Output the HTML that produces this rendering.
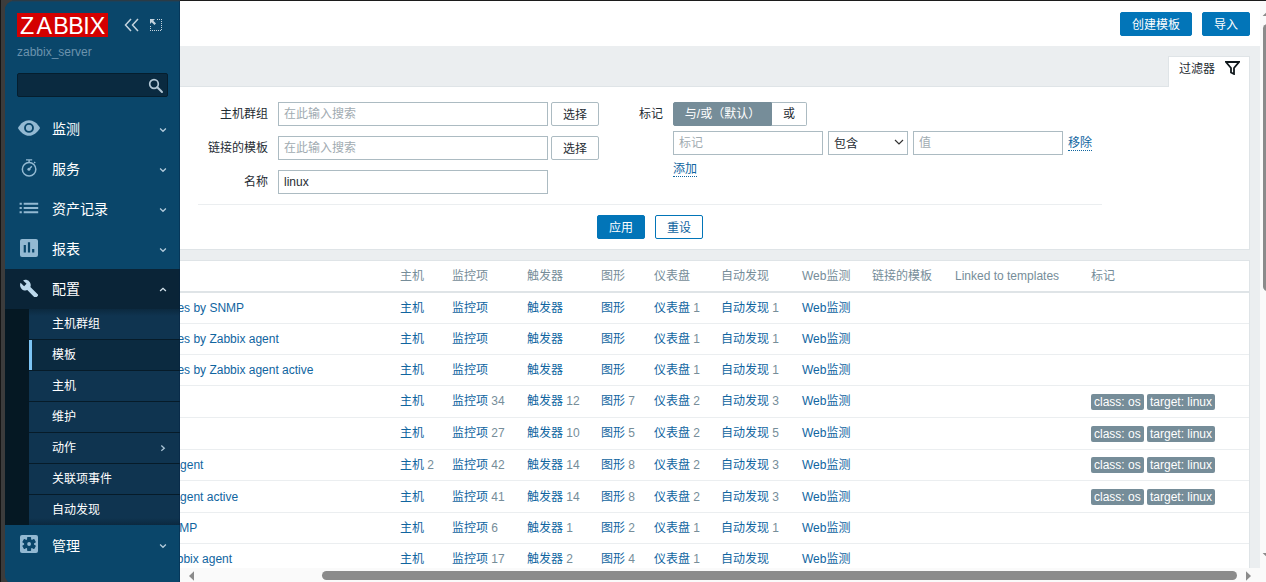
<!DOCTYPE html>
<html lang="zh-CN">
<head>
<meta charset="utf-8">
<title>模板的配置</title>
<style>
*{box-sizing:border-box;margin:0;padding:0}
html,body{width:1266px;height:582px;overflow:hidden}
body{background:#3c3c3c;font-family:"Liberation Sans","Noto Sans CJK SC",sans-serif;font-size:12px;color:#1f2c33;position:relative}
.abs{position:absolute}
.t{position:absolute;white-space:nowrap;line-height:18px;height:18px}
a{color:#10659f;text-decoration:none}
#edgeL{left:0;top:0;width:1px;height:582px;background:#151515}
#edgeT{left:180px;top:0;width:1086px;height:1px;background:#1c1c1c}
/* main */
#main{left:180px;top:1px;width:1080px;height:581px;background:#ebeef0;overflow:hidden}
#hdr{left:0;top:0;width:1080px;height:45px;background:#fff}
.btn{position:absolute;height:24px;line-height:24px;border:1px solid #0275b8;background:#0275b8;color:#fff;border-radius:2px;text-align:center;font-size:12px;white-space:nowrap}
.btn.alt{background:#fff;color:#10659f}
.btn.gr{background:#fff;color:#1f2c33;border-color:#acbbc2}
.inp{position:absolute;height:24px;border:1px solid #acbbc2;background:#fff;line-height:22px;padding-left:5px;color:#1f2c33;white-space:nowrap}
.ph{color:#a1abb1}
.lbl{position:absolute;white-space:nowrap;line-height:18px;text-align:right}
.dot{border-bottom:1px dotted #10659f}
/* table */
#tbl{left:-1px;top:259px;width:1071px;height:330px;background:#fff;border:1px solid #dfe4e7}
.hl{position:absolute;left:0;width:1069px;height:1px;background:#ebeef0}
.th{color:#768d99}
.g{color:#768d99}
.tag{position:absolute;height:16px;line-height:16px;background:#768d99;color:#fff;border-radius:2px;padding:0 3px;white-space:nowrap}
/* sidebar */
#side{left:5px;top:1px;width:175px;height:583px;background:#0a466a;border-radius:9px 0 0 9px;overflow:hidden}
.mi{position:absolute;left:47px;color:#fff;font-size:14px;line-height:20px;white-space:nowrap}
.si{position:absolute;left:24px;width:151px;height:30px;background:#0f3450;color:#fff;font-size:12px;line-height:30px;padding-left:23px;white-space:nowrap}
</style>
</head>
<body>
<div class="abs" id="edgeL"></div>

<div class="abs" id="main">
  <div class="abs" id="hdr"></div>
  <div class="btn" style="left:940px;top:11px;width:72px">创建模板</div>
  <div class="btn" style="left:1022px;top:11px;width:48px">导入</div>

  <!-- filter tab -->
  <div class="abs" style="left:988px;top:55px;width:82px;height:32px;background:#fff;border:1px solid #dfe4e7;border-bottom:none"></div>
  <div class="abs" style="left:-1px;top:85px;width:1071px;height:164px;background:#fff;border:1px solid #dfe4e7"></div>
  <div class="abs" style="left:989px;top:85px;width:80px;height:2px;background:#fff"></div>
  <div class="t" style="left:999px;top:59px;color:#1f2c33">过滤器</div>
  <svg class="abs" style="left:1045px;top:60px" width="15" height="14" viewBox="0 0 15 14"><path d="M1 1h13l-5 6v6l-3-1.500v-4.500z" fill="none" stroke="#10181c" stroke-width="1.800" stroke-linejoin="miter"/></svg>

  <!-- filter left -->
  <div class="lbl" style="left:0;width:88px;top:104px">主机群组</div>
  <div class="inp ph" style="left:98px;top:101px;width:270px">在此输入搜索</div>
  <div class="btn gr" style="left:371px;top:101px;width:48px">选择</div>
  <div class="lbl" style="left:0;width:88px;top:138px">链接的模板</div>
  <div class="inp ph" style="left:98px;top:135px;width:270px">在此输入搜索</div>
  <div class="btn gr" style="left:371px;top:135px;width:48px">选择</div>
  <div class="lbl" style="left:0;width:88px;top:172px">名称</div>
  <div class="inp" style="left:98px;top:169px;width:270px">linux</div>

  <!-- filter right -->
  <div class="lbl" style="left:440px;width:43px;top:104px">标记</div>
  <div class="abs" style="left:493px;top:101px;width:99px;height:24px;background:#768d99;color:#fff;border:1px solid #768d99;border-radius:2px 0 0 2px;line-height:22px;text-align:center;white-space:nowrap">与/或（默认）</div>
  <div class="abs" style="left:592px;top:101px;width:35px;height:24px;background:#fff;border:1px solid #acbbc2;border-left:none;border-radius:0 2px 2px 0;line-height:22px;text-align:center">或</div>
  <div class="inp ph" style="left:493px;top:130px;width:150px">标记</div>
  <div class="inp" style="left:648px;top:130px;width:80px;line-height:25px">包含</div>
  <svg class="abs" style="left:714px;top:138px" width="10" height="7" viewBox="0 0 10 7"><path d="M1 1l4 4 4-4" fill="none" stroke="#333" stroke-width="1.200"/></svg>
  <div class="inp ph" style="left:733px;top:130px;width:150px">值</div>
  <div class="t" style="left:888px;top:133px"><a class="dot">移除</a></div>
  <div class="t" style="left:493px;top:159px"><a class="dot">添加</a></div>

  <div class="abs" style="left:18px;top:203px;width:904px;height:1px;background:#ebeef0"></div>
  <div class="btn" style="left:417px;top:214px;width:48px">应用</div>
  <div class="btn alt" style="left:475px;top:214px;width:48px">重设</div>

  <!-- table -->
  <div class="abs" id="tbl">
    <div class="abs" style="left:0;top:30px;width:1069px;height:2px;background:#dfe4e7"></div>
    <div class="hl" style="top:62px"></div>
    <div class="hl" style="top:93px"></div>
    <div class="hl" style="top:124px"></div>
    <div class="hl" style="top:156px"></div>
    <div class="hl" style="top:188px"></div>
    <div class="hl" style="top:219px"></div>
    <div class="hl" style="top:251px"></div>
    <div class="hl" style="top:282px"></div>
  </div>
  <!-- table header -->
  <div class="t th" style="left:220px;top:266px">主机</div>
  <div class="t th" style="left:272px;top:266px">监控项</div>
  <div class="t th" style="left:347px;top:266px">触发器</div>
  <div class="t th" style="left:421px;top:266px">图形</div>
  <div class="t th" style="left:474px;top:266px">仪表盘</div>
  <div class="t th" style="left:541px;top:266px">自动发现</div>
  <div class="t th" style="left:622px;top:266px">Web监测</div>
  <div class="t th" style="left:692px;top:266px">链接的模板</div>
  <div class="t th" style="left:775px;top:266px">Linked to templates</div>
  <div class="t th" style="left:911px;top:266px">标记</div>
  <!-- row: Linux block devices by SNMP -->
  <div class="t" style="left:-94px;top:298px"><a>Linux block devices by SNMP</a></div>
  <div class="t" style="left:220px;top:298px"><a>主机</a></div>
  <div class="t" style="left:272px;top:298px"><a>监控项</a></div>
  <div class="t" style="left:347px;top:298px"><a>触发器</a></div>
  <div class="t" style="left:421px;top:298px"><a>图形</a></div>
  <div class="t" style="left:474px;top:298px"><a>仪表盘</a> <span class="g">1</span></div>
  <div class="t" style="left:541px;top:298px"><a>自动发现</a> <span class="g">1</span></div>
  <div class="t" style="left:622px;top:298px"><a>Web监测</a></div>
  <!-- row: Linux block devices by Zabbix agent -->
  <div class="t" style="left:-94px;top:329px"><a>Linux block devices by Zabbix agent</a></div>
  <div class="t" style="left:220px;top:329px"><a>主机</a></div>
  <div class="t" style="left:272px;top:329px"><a>监控项</a></div>
  <div class="t" style="left:347px;top:329px"><a>触发器</a></div>
  <div class="t" style="left:421px;top:329px"><a>图形</a></div>
  <div class="t" style="left:474px;top:329px"><a>仪表盘</a> <span class="g">1</span></div>
  <div class="t" style="left:541px;top:329px"><a>自动发现</a> <span class="g">1</span></div>
  <div class="t" style="left:622px;top:329px"><a>Web监测</a></div>
  <!-- row: Linux block devices by Zabbix agent active -->
  <div class="t" style="left:-94px;top:360px"><a>Linux block devices by Zabbix agent active</a></div>
  <div class="t" style="left:220px;top:360px"><a>主机</a></div>
  <div class="t" style="left:272px;top:360px"><a>监控项</a></div>
  <div class="t" style="left:347px;top:360px"><a>触发器</a></div>
  <div class="t" style="left:421px;top:360px"><a>图形</a></div>
  <div class="t" style="left:474px;top:360px"><a>仪表盘</a> <span class="g">1</span></div>
  <div class="t" style="left:541px;top:360px"><a>自动发现</a> <span class="g">1</span></div>
  <div class="t" style="left:622px;top:360px"><a>Web监测</a></div>
  <!-- row: Linux by Prom -->
  <div class="t" style="left:-94px;top:391px"><a>Linux by Prom</a></div>
  <div class="t" style="left:220px;top:391px"><a>主机</a></div>
  <div class="t" style="left:272px;top:391px"><a>监控项</a> <span class="g">34</span></div>
  <div class="t" style="left:347px;top:391px"><a>触发器</a> <span class="g">12</span></div>
  <div class="t" style="left:421px;top:391px"><a>图形</a> <span class="g">7</span></div>
  <div class="t" style="left:474px;top:391px"><a>仪表盘</a> <span class="g">2</span></div>
  <div class="t" style="left:541px;top:391px"><a>自动发现</a> <span class="g">3</span></div>
  <div class="t" style="left:622px;top:391px"><a>Web监测</a></div>
  <div class="tag" style="left:911px;top:393px;width:53px">class: os</div>
  <div class="tag" style="left:967px;top:393px;width:68px">target: linux</div>
  <!-- row: Linux by SNMP -->
  <div class="t" style="left:-94px;top:423px"><a>Linux by SNMP</a></div>
  <div class="t" style="left:220px;top:423px"><a>主机</a></div>
  <div class="t" style="left:272px;top:423px"><a>监控项</a> <span class="g">27</span></div>
  <div class="t" style="left:347px;top:423px"><a>触发器</a> <span class="g">10</span></div>
  <div class="t" style="left:421px;top:423px"><a>图形</a> <span class="g">5</span></div>
  <div class="t" style="left:474px;top:423px"><a>仪表盘</a> <span class="g">2</span></div>
  <div class="t" style="left:541px;top:423px"><a>自动发现</a> <span class="g">5</span></div>
  <div class="t" style="left:622px;top:423px"><a>Web监测</a></div>
  <div class="tag" style="left:911px;top:425px;width:53px">class: os</div>
  <div class="tag" style="left:967px;top:425px;width:68px">target: linux</div>
  <!-- row: Linux by Zabbix agent -->
  <div class="t" style="left:-94px;top:455px"><a>Linux by Zabbix agent</a></div>
  <div class="t" style="left:220px;top:455px"><a>主机</a> <span class="g">2</span></div>
  <div class="t" style="left:272px;top:455px"><a>监控项</a> <span class="g">42</span></div>
  <div class="t" style="left:347px;top:455px"><a>触发器</a> <span class="g">14</span></div>
  <div class="t" style="left:421px;top:455px"><a>图形</a> <span class="g">8</span></div>
  <div class="t" style="left:474px;top:455px"><a>仪表盘</a> <span class="g">2</span></div>
  <div class="t" style="left:541px;top:455px"><a>自动发现</a> <span class="g">3</span></div>
  <div class="t" style="left:622px;top:455px"><a>Web监测</a></div>
  <div class="tag" style="left:911px;top:456px;width:53px">class: os</div>
  <div class="tag" style="left:967px;top:456px;width:68px">target: linux</div>
  <!-- row: Linux by Zabbix agent active -->
  <div class="t" style="left:-94px;top:487px"><a>Linux by Zabbix agent active</a></div>
  <div class="t" style="left:220px;top:487px"><a>主机</a></div>
  <div class="t" style="left:272px;top:487px"><a>监控项</a> <span class="g">41</span></div>
  <div class="t" style="left:347px;top:487px"><a>触发器</a> <span class="g">14</span></div>
  <div class="t" style="left:421px;top:487px"><a>图形</a> <span class="g">8</span></div>
  <div class="t" style="left:474px;top:487px"><a>仪表盘</a> <span class="g">2</span></div>
  <div class="t" style="left:541px;top:487px"><a>自动发现</a> <span class="g">3</span></div>
  <div class="t" style="left:622px;top:487px"><a>Web监测</a></div>
  <div class="tag" style="left:911px;top:488px;width:53px">class: os</div>
  <div class="tag" style="left:967px;top:488px;width:68px">target: linux</div>
  <!-- row: Linux CPU by SNMP -->
  <div class="t" style="left:-94px;top:518px"><a>Linux CPU by SNMP</a></div>
  <div class="t" style="left:220px;top:518px"><a>主机</a></div>
  <div class="t" style="left:272px;top:518px"><a>监控项</a> <span class="g">6</span></div>
  <div class="t" style="left:347px;top:518px"><a>触发器</a> <span class="g">1</span></div>
  <div class="t" style="left:421px;top:518px"><a>图形</a> <span class="g">2</span></div>
  <div class="t" style="left:474px;top:518px"><a>仪表盘</a> <span class="g">1</span></div>
  <div class="t" style="left:541px;top:518px"><a>自动发现</a> <span class="g">1</span></div>
  <div class="t" style="left:622px;top:518px"><a>Web监测</a></div>
  <!-- row: Linux CPU by Zabbix agent -->
  <div class="t" style="left:-94px;top:549px"><a>Linux CPU by Zabbix agent</a></div>
  <div class="t" style="left:220px;top:549px"><a>主机</a></div>
  <div class="t" style="left:272px;top:549px"><a>监控项</a> <span class="g">17</span></div>
  <div class="t" style="left:347px;top:549px"><a>触发器</a> <span class="g">2</span></div>
  <div class="t" style="left:421px;top:549px"><a>图形</a> <span class="g">4</span></div>
  <div class="t" style="left:474px;top:549px"><a>仪表盘</a> <span class="g">1</span></div>
  <div class="t" style="left:541px;top:549px"><a>自动发现</a></div>
  <div class="t" style="left:622px;top:549px"><a>Web监测</a></div>

  <!-- horizontal scrollbar -->
  <div class="abs" style="left:0;top:566.500px;width:1080px;height:15px;background:#fafafa"></div>
  <div class="abs" style="left:142px;top:570px;width:915px;height:9px;background:#8b8b8b;border-radius:5px"></div>
  <svg class="abs" style="left:9px;top:569.500px" width="5" height="10" viewBox="0 0 5 10"><path d="M5 0.300v9.400L0 5z" fill="#8b8b8b"/></svg>
  <svg class="abs" style="left:1066px;top:569.500px" width="5" height="10" viewBox="0 0 5 10"><path d="M0 0.300v9.400L5 5z" fill="#8b8b8b"/></svg>
</div>

<!-- vertical scrollbar -->
<div class="abs" style="left:1260px;top:1px;width:6px;height:581px;background:#fafafa"></div>
<div class="abs" style="left:1262.800px;top:24px;width:9px;height:267px;background:#8b8b8b;border-radius:4.500px"></div>
<svg class="abs" style="left:1262px;top:12px" width="4" height="4" viewBox="0 0 4 4"><path d="M0.600 4L4 0.700V4z" fill="#8b8b8b"/></svg>
<svg class="abs" style="left:1262px;top:553px" width="4" height="4" viewBox="0 0 4 4"><path d="M0.600 0H4V3.300z" fill="#8b8b8b"/></svg>

<!-- sidebar -->
<div class="abs" style="left:12px;top:0;width:168px;height:1px;background:#2a3b46"></div>
<div class="abs" style="left:4.500px;top:1px;width:30px;height:583px;background:#0a466a;border-radius:9px 0 0 9px"></div>
<div class="abs" style="left:4.500px;top:269px;width:10px;height:40px;background:#0a2437"></div>
<div class="abs" style="left:4.500px;top:309px;width:10px;height:216px;background:#051823"></div>
<div class="abs" id="side">
  <!-- logo -->
  <div class="abs" style="left:12px;top:12px;width:91px;height:24px;background:#d40000"></div>
  <svg class="abs" style="left:12px;top:12px" width="91" height="24" viewBox="0 0 91 24"><text transform="scale(0.970 1)" x="3.200 20.100 37.300 52.900 68.400 74.900" y="20.800" font-family="Liberation Sans, sans-serif" font-size="24" fill="#fff">ZABBIX</text></svg>
  <svg class="abs" style="left:119px;top:17px" width="16" height="14" viewBox="0 0 16 14"><path d="M7 1L1.500 7 7 13M14 1L8.500 7 14 13" fill="none" stroke="#c3d3de" stroke-width="1.500"/></svg>
  <svg class="abs" style="left:144px;top:17px" width="14" height="14" viewBox="0 0 14 14"><path d="M6.500 1.500H12.500V12.500H1.500V6.500" fill="none" stroke="#c3d3de" stroke-width="1" stroke-dasharray="1 1" stroke-dashoffset="0.500" shape-rendering="crispEdges"/><path d="M1 1h5L4.300 2.700 7 5.400 5.400 7 2.700 4.300 1 6z" fill="#c3d3de"/></svg>
  <div class="t" style="left:12px;top:42px;color:#6c93ad">zabbix_server</div>
  <!-- search -->
  <div class="abs" style="left:12px;top:72px;width:151px;height:24px;background:#0a2a40;border:1px solid #051e2e;border-radius:2px"></div>
  <svg class="abs" style="left:143px;top:77px" width="16" height="16" viewBox="0 0 16 16"><circle cx="6" cy="6" r="4.300" fill="none" stroke="#b4c8d6" stroke-width="1.700"/><path d="M9.300 9.300L14 14" stroke="#b4c8d6" stroke-width="2" stroke-linecap="round"/></svg>

  <!-- main menu -->
  <svg class="abs" style="left:12px;top:119px" width="24" height="16" viewBox="0 0 24 16"><path d="M0.900 7.900C3.800 3 7.800 0.200 12 0.200S20.200 3 23.100 7.900C20.200 12.800 16.200 15.700 12 15.700S3.800 12.800 0.900 7.900z" fill="#93b9d2"/><circle cx="12" cy="7.900" r="4" fill="none" stroke="#0a466a" stroke-width="1.900"/></svg>
  <div class="mi" style="top:118px">监测</div>
  <svg class="abs" style="left:15px;top:157px" width="18" height="20" viewBox="0 0 18 20"><circle cx="9.100" cy="11.250" r="6.750" fill="none" stroke="#93b9d2" stroke-width="1.500"/><path d="M6 1.900h6.200M9.100 1.900v2.800M14.200 5.100l1-1M9.100 11.200l2.700-3" fill="none" stroke="#93b9d2" stroke-width="1.400"/><circle cx="8.900" cy="11.300" r="1.500" fill="#93b9d2"/></svg>
  <div class="mi" style="top:158px">服务</div>
  <svg class="abs" style="left:14px;top:201px" width="20" height="12" viewBox="0 0 20 12"><path d="M0.600 0.800h2.200v2h-2.200zM4.700 0.800h14.500v2h-14.500zM0.600 5h2.200v2h-2.200zM4.700 5h14.500v2h-14.500zM0.600 9.200h2.200v2h-2.200zM4.700 9.200h14.500v2h-14.500z" fill="#93b9d2"/></svg>
  <div class="mi" style="top:198px">资产记录</div>
  <svg class="abs" style="left:15px;top:238px" width="18" height="18" viewBox="0 0 18 18"><rect width="18" height="18" rx="2" fill="#93b9d2"/><path d="M3.700 6h2.200v7.500h-2.200zM7.900 3.200h2.200v10.300h-2.200zM12.100 10h2.200v3.500h-2.200z" fill="#0a466a"/></svg>
  <div class="mi" style="top:238px">报表</div>

  <div class="abs" style="left:0;top:268px;width:175px;height:40px;background:#0a2437"></div>
  <svg class="abs" style="left:14.600px;top:277.600px" width="18.700" height="18.700" viewBox="0 0 20 20"><path d="M19.200 16.700l-8.100-8.100c0.800-2 0.400-4.400-1.300-6C8 0.800 5.400 0.500 3.300 1.500l3.700 3.700-2.600 2.600L0.600 4.100c-1 2.100-0.600 4.700 1.200 6.500 1.600 1.600 4 2.100 6 1.300l8.100 8.100c0.400 0.400 0.900 0.400 1.300 0l2-2c0.400-0.400 0.400-1 0-1.300z" fill="#bcd9ec"/></svg>
  <div class="mi" style="top:278px">配置</div>

  <svg class="abs ch" style="left:154px;top:127px" width="8" height="5" viewBox="0 0 8 5"><path d="M1.100 0.600L4 3.300 6.900 0.600" fill="none" stroke="#b4cbdb" stroke-width="1.300"/></svg>
  <svg class="abs ch" style="left:154px;top:167px" width="8" height="5" viewBox="0 0 8 5"><path d="M1.100 0.600L4 3.300 6.900 0.600" fill="none" stroke="#b4cbdb" stroke-width="1.300"/></svg>
  <svg class="abs ch" style="left:154px;top:207px" width="8" height="5" viewBox="0 0 8 5"><path d="M1.100 0.600L4 3.300 6.900 0.600" fill="none" stroke="#b4cbdb" stroke-width="1.300"/></svg>
  <svg class="abs ch" style="left:154px;top:247px" width="8" height="5" viewBox="0 0 8 5"><path d="M1.100 0.600L4 3.300 6.900 0.600" fill="none" stroke="#b4cbdb" stroke-width="1.300"/></svg>
  <svg class="abs ch" style="left:154px;top:286px" width="8" height="5" viewBox="0 0 8 5"><path d="M1.100 4L4 1.300 6.900 4" fill="none" stroke="#d5e3ec" stroke-width="1.300"/></svg>

  <!-- submenu -->
  <div class="abs" style="left:0;top:308px;width:175px;height:216px;background:#051823"></div>
  <div class="abs" style="left:24px;top:308px;width:151px;height:216px;background:#061b29"></div>
  <div class="si" style="top:308px">主机群组</div>
  <div class="si" style="top:339px;background:#0b2a40;border-left:3px solid #7cc4f5;padding-left:20px">模板</div>
  <div class="si" style="top:370px">主机</div>
  <div class="si" style="top:401px">维护</div>
  <div class="si" style="top:432px">动作</div>
  <div class="si" style="top:463px">关联项事件</div>
  <div class="si" style="top:494px">自动发现</div>
  <div class="abs" style="left:24px;top:308px;width:151px;height:7px;background:linear-gradient(rgba(4,20,32,0.350),rgba(4,20,32,0))"></div>
  <div class="abs" style="left:24px;top:517px;width:151px;height:7px;background:linear-gradient(rgba(4,20,32,0),rgba(4,20,32,0.350))"></div>
  <svg class="abs" style="left:155px;top:443px" width="6" height="8" viewBox="0 0 6 8"><path d="M1.300 1.600L4.300 4.200 1.300 6.800" fill="none" stroke="#a9c3d5" stroke-width="1.300"/></svg>

  <svg class="abs" style="left:15px;top:534px" width="18" height="18" viewBox="0 0 18 18"><rect width="18" height="18" rx="2" fill="#93b9d2"/><g fill="#0a466a"><circle cx="9.100" cy="9" r="5"/><rect x="7.100" y="2.100" width="4" height="13.800" rx="0.600"/><rect x="7.100" y="2.100" width="4" height="13.800" rx="0.600" transform="rotate(60 9.100 9)"/><rect x="7.100" y="2.100" width="4" height="13.800" rx="0.600" transform="rotate(120 9.100 9)"/></g><circle cx="9.100" cy="9" r="1.900" fill="#93b9d2"/></svg>
  <div class="mi" style="top:535px">管理</div>
  <svg class="abs ch" style="left:154px;top:543px" width="8" height="5" viewBox="0 0 8 5"><path d="M1.100 0.600L4 3.300 6.900 0.600" fill="none" stroke="#b4cbdb" stroke-width="1.300"/></svg>
</div>
<div class="abs" style="left:11px;top:1px;width:169px;height:1px;background:#18425e"></div>
<div class="abs" style="left:179px;top:1px;width:1px;height:581px;background:rgba(0,30,60,0.350)"></div>
<div class="abs" id="edgeT"></div>
</body>
</html>
